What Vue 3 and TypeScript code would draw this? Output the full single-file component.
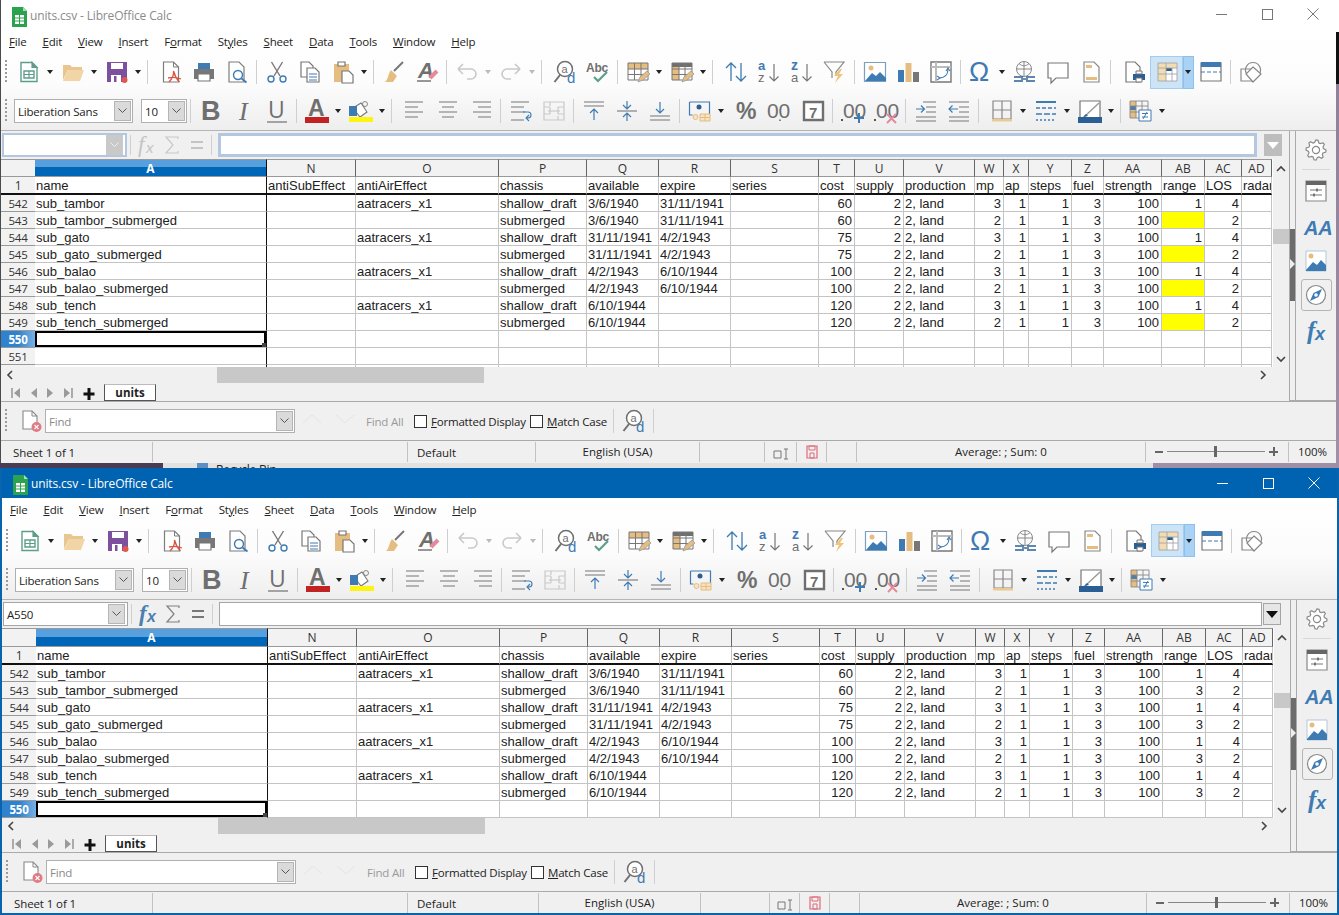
<script setup lang="ts">
import { h } from 'vue'

type Shape =
  | { d: string; f?: string; s?: string; w?: number }
  | { t: string; x: number; y: number; z: number; f: string; b?: boolean; i?: boolean; ff?: string }

const GY = '#6f6f6f'
const LG = '#c9c9c9'
const BL = '#3f7bb3'
const DB = '#2a5f95'
const TN = '#e6bd80'
const GN = '#5d9e8b'
const PU = '#7c4f9f'
const RD = '#e0584a'
const PK = '#e58a9a'

const p = (d: string, f = 'none', s = 'none', w = 1.2): Shape => ({ d, f, s, w })
const t = (txt: string, x: number, y: number, z: number, f: string, o: { b?: boolean; i?: boolean; ff?: string } = {}): Shape => ({ t: txt, x, y, z, f, ...o })
const circle = (cx: number, cy: number, r: number) => `M${cx - r} ${cy}a${r} ${r} 0 1 0 ${2 * r} 0a${r} ${r} 0 1 0 ${-2 * r} 0z`

function gearPath(): string {
  let d = ''
  const n = 8
  for (let k = 0; k < n * 4; k++) {
    const a = (k / (n * 4)) * Math.PI * 2
    const r = k % 4 < 2 ? 10 : 7.6
    d += `${k ? 'L' : 'M'}${(12 + r * Math.cos(a)).toFixed(1)} ${(12 + r * Math.sin(a)).toFixed(1)}`
  }
  return d + 'z'
}

const icons: Record<string, Shape[]> = {
  new: [p('M4 2.5h11l5 5v14H4z', '#fff', GN, 1.4), p('M15 2.5l5 5h-5z', GN, GN), p('M7 11h10v7H7z', '#fff', GN, 1.4), p('M7 14.5h10M12 11v7', 'none', GN, 1.2)],
  open: [p('M2 20V5h7l2 2h10v3H7L2 20z', '#e9c68f'), p('M7 10h16l-4 11H2z', '#f2d5a6')],
  save: [p('M2 2h20v20H2z', PU), p('M6 3h12v6H6z', '#fff'), p('M6 15h10v7H6z', '#fff'), p('M9 16h2.5v6H9z', PU), p(circle(19.5, 20, 3), RD)],
  pdf: [p('M4.5 2h10l5 5v15h-15z', '#fff', '#7d7d7d', 1.2), p('M14.5 2v5h5', 'none', '#7d7d7d', 1), p('M10 22c3-3 5-7 4.5-11c1 4 3 8 6 11M9 18c4-1 8-1 13 1', 'none', '#d9553f', 1.3)],
  print: [p('M6 3h12v6H6z', BL), p('M2 9h20v10H2z', '#777'), p('M6 14h12v7H6z', '#fff', '#777', 1.2)],
  preview: [p('M4 2h10l5 5v15H4z', '#fff', '#7d7d7d', 1.2), p(circle(13, 15, 4.5), '#fff', BL, 1.4), p('M16.5 18.5l5 4', 'none', BL, 1.8)],
  cut: [p('M6.5 2L15 16M17.5 2L9 16', 'none', '#777', 1.4), p(circle(6, 19, 3) + circle(18, 19, 3), 'none', BL, 1.4)],
  copy: [p('M3 2h8l4 4v11H3z', '#fff', '#777', 1.2), p('M9 8h8l4 4v10H9z', '#fff', '#777', 1.2), p('M11 14h8M11 17h8M11 20h8', 'none', BL, 1)],
  paste: [p('M3 4h15v18H3z', TN), p('M7 2h7v4H7z', '#fff', '#777', 1.2), p('M11 11h7l4 4v8H11z', '#fff', '#777', 1.2)],
  clone: [p('M21 2l-9 9', 'none', '#777', 2), p('M9 10l6 6-4 6H3c3-2 3-8 6-12z', TN)],
  clear: [t('A', 3, 18, 22, GY, { b: true, i: true, ff: 'Liberation Sans' }), p('M2 21h14', 'none', '#555', 1.2), p('M15 18l7-7', 'none', PK, 4)],
  undo: [p('M3 9l5-5M3 9l5 5M3 9h13a5 5 0 0 1 0 10h-4', 'none', LG, 1.6)],
  redo: [p('M21 9l-5-5M21 9l-5 5M21 9H8a5 5 0 0 0 0 10h4', 'none', LG, 1.6)],
  find: [p(circle(12, 9, 7.5), '#fff', GY, 1.5), p('M7 15L1.5 22', 'none', GY, 2), t('a', 8.5, 12.5, 11, GY, { ff: 'Liberation Sans' }), t('d', 14, 22.5, 15, BL, { ff: 'Liberation Sans' })],
  spell: [t('Abc', 0, 12, 12, GY, { b: true, ff: 'Liberation Sans' }), p('M8 17l4 4 9-9', 'none', GN, 2.2)],
  table: [p('M2 3h20v6H2z', TN), p('M2 3h20v17H2zM2 9h20M2 14.5h20M8.5 3v17M15 3v17', 'none', '#777', 1), p('M12 22l2-5 7-6 3 3-7 6z', TN, '#999', .8)],
  col: [p('M2 3h7v17H2z', TN), p('M2 3h20v4H2z', GY), p('M2 3h20v17H2zM2 9h20M2 14.5h20M9 3v17M15 3v17', 'none', '#777', 1), p('M12 22l2-5 7-6 3 3-7 6z', TN, '#999', .8)],
  sort: [p('M7 21V3M2 8l5-5 5 5M17 3v18M12 16l5 5 5-5', 'none', BL, 1.3)],
  az: [t('a', 1, 10, 13, BL, { b: true, ff: 'Liberation Sans' }), t('z', 1, 22, 13, GY, { ff: 'Liberation Sans' }), p('M17 4v17M12.5 16.5l4.5 4.5 4.5-4.5', 'none', '#777', 1.2)],
  za: [t('z', 1, 10, 14, BL, { b: true, ff: 'Liberation Sans' }), t('a', 1, 22, 13, GY, { ff: 'Liberation Sans' }), p('M17 4v17M12.5 16.5l4.5 4.5 4.5-4.5', 'none', '#777', 1.2)],
  filter: [p('M1 2h20l-8 10v4', 'none', '#888', 1.2), p('M1 2l8 10v6', 'none', '#888', 1.2), p('M17 9l-6 7h4l-3 7 8-9h-4l3-5z', '#efc478')],
  image: [p('M1.5 2.5h21v19h-21z', '#fff', '#7a9fc0', 1.2), p(circle(8, 8, 2.5), TN), p('M2 21l7-8 4 3 4-4 6 6v3z', BL)],
  chart: [p('M2 10h6v12H2z', BL), p('M9.5 3h6v19h-6z', TN), p('M17 12h6v10h-6z', '#777')],
  pivot: [p('M2 2h20v20H2z', '#fff', '#777', 1.4), p('M2 7h20M7 2v20', 'none', '#bbb', 2), p('M10 18c5 0 9-3 9-9', 'none', BL, 1.1), p('M17 11l2-3 2 3M8 16l3 2-3 2', 'none', BL, 1.1)],
  omega: [t('Ω', 0, 21, 27, BL, { ff: 'Liberation Sans' })],
  link: [p(circle(11, 9, 7.5) + 'M3.5 9h15M11 1.5v15M6 3.5c3 3 7 3 10 0', 'none', '#888', 1), p('M1 17h9M1 21h9M13 17h9M13 21h9', 'none', DB, 1.6), p('M8 19h7', 'none', DB, 1.4)],
  comment: [p('M2 3h20v15H10l-5 5v-5H2z', '#fff', '#777', 1.2)],
  header: [p('M5 2h10l5 5v15H5z', '#fff', '#888', 1.2), p('M7 5h6v3H7zM7 17h11v3H7z', TN)],
  printarea: [p('M4 2h9l5 5v15H4z', '#fff', '#777', 1.2), p('M11 14h12v6H11z', DB), p('M14 11h6v3h-6z', '#fff', '#777', 1), p('M14 18h6v4h-6z', '#fff', '#777', 1)],
  freeze: [p('M3 3h19v18H3z', '#fff'), p('M3 3h8v18H3zM11 3h11v5H11z', '#f1dcb3'), p('M11 8h6v3h-6z', DB), p('M3 3h19v18H3zM3 8h19M3 14h19M11 3v18M17 8v13', 'none', '#a5a5a5', .9)],
  split: [p('M2 3h20v18H2z', '#fff', '#777', 1.2), p('M2 2h20v5H2z', BL), p('M2 12h4M8 12h4M14 12h4M20 12h2', 'none', BL, 1.2)],
  shapes: [p('M2 9h12v12H2z', '#fff', '#888', 1.2), p('M14 2.5a7.5 7.5 0 1 1-.01 0z', 'none', '#888', 1.2), p('M14 7l8 7-8 8-7-8z', '#fff', '#888', 1.2)],
  bold: [t('B', 2, 21, 27, GY, { b: true, ff: 'Liberation Sans' })],
  ital: [t('I', 7, 21, 26, GY, { i: true, ff: 'Liberation Serif' })],
  under: [t('U', 3, 19, 23, GY, { ff: 'Open Sans' }), p('M2 23h20', 'none', GY, 1.2)],
  color: [t('A', 3, 17, 23, GY, { b: true, ff: 'Liberation Sans' }), p('M0 18h24v6H0z', '#c32222')],
  bg: [p('M4 9l8-5 6 9-7 5z', '#fff', '#777', 1.1), p('M0 7h8v10H0z', BL), p(circle(16, 5, 2.5), 'none', '#888', 1), p('M0 18h24v5H0z', '#fdf511')],
  left: [p('M2 3h18M2 8h13M2 13h18M2 18h13', 'none', '#777', 1.1)],
  center: [p('M3 3h18M6 8h12M3 13h18M6 18h12', 'none', '#777', 1.1)],
  right: [p('M4 3h18M9 8h13M4 13h18M9 18h13', 'none', '#777', 1.1)],
  wrap: [p('M2 3h18M2 8h13M2 13h14M2 21h13', 'none', '#777', 1.1), p('M14 13h5a2.5 2.5 0 0 1 0 6h-1M20 16l-3 3 3 3', 'none', BL, 1.1)],
  merge: [p('M2 3h20v18H2zM2 8h6M16 8h6M2 15h6M16 15h6M8 8v7M16 8v7M8 3v4M16 17v4', 'none', LG, 1.2), p('M6 12h12', 'none', LG, 1.2)],
  top: [p('M2 3h20M2 7h20M2 21', 'none', '#777', 1.1), p('M12 21v-10M8 14l4-4 4 4', 'none', BL, 1.2)],
  mid: [p('M2 12h20', 'none', '#777', 1.1), p('M12 2v7M8 6l4 4 4-4M12 22v-8M8 18l4-4 4 4', 'none', BL, 1.2)],
  bot: [p('M2 17h20M2 21h20', 'none', '#777', 1.1), p('M12 3v11M8 10l4 4 4-4', 'none', BL, 1.2)],
  currency: [p('M1.5 3h20v13h-9', 'none', BL, 1.2), p('M1.5 3v13h3', 'none', BL, 1.2), p(circle(11, 8, 2.5), DB), p(circle(7.5, 18, 2.5) + 'M12 15h10v7H12zM12 18.5h10M17 15v7', '#f4e3c4', TN, 1)],
  pct: [t('%', 1, 20, 23, GY, { b: true, ff: 'Liberation Sans' })],
  num: [t('00', -1, 19, 21, GY, { ff: 'Liberation Sans' }), p('M11.2 20.5h1.6v1.6h-1.6z', GY)],
  date: [p('M3 3h19v18H3z', '#fff', GY, 2.4), t('7', 8, 18.5, 15, GY, { b: true, ff: 'Liberation Sans' })],
  adddec: [p('M0 20h2v2H0z', '#555'), t('00', 2, 19, 21, GY, { ff: 'Liberation Sans' }), p('M18 14v10M13 19h10', 'none', BL, 2)],
  deldec: [p('M0 20h2v2H0z', '#555'), t('00', 2, 19, 21, GY, { ff: 'Liberation Sans' }), p('M13 15l9 9M22 15l-9 9', 'none', PK, 2)],
  indent: [p('M9 3h13M12 8h10M12 13h10M2 18h20M2 22h20', 'none', '#777', 1.1), p('M2 10h8M7 6.5l3.5 3.5-3.5 3.5', 'none', BL, 1.2)],
  outdent: [p('M2 3h20M12 8h10M12 13h10M2 18h20M2 22h20', 'none', '#777', 1.1), p('M11 10H2M5.5 6.5L2 10l3.5 3.5', 'none', BL, 1.2)],
  borders: [p('M3 2h18v18H3zM3 11h18M12 2v18', 'none', '#888', 1.2), p('M2 20h20v2.5H2z', '#ecc98f')],
  bstyle: [p('M2 3h20', 'none', BL, 2), p('M2 9h4M8 9h4M14 9h4M20 9h2M2 15h6M10 15h6M18 15h4', 'none', BL, 1.6), p('M2 21h2M6 21h2M10 21h2M14 21h2M18 21h2', 'none', BL, 1.6)],
  bcolor: [p('M2 2h20v18H2z', '#fff', '#777', 1.2), p('M6 18L21 4', 'none', '#999', 1.4), p('M5 18l3-3 2 2z', DB), p('M0 18h24v6H0z', DB)],
  cond: [p('M1 2h6v17H1z', TN), p('M1 7h6v4H1z', '#4f7ea9'), p('M1 2h18v17H1zM1 7h18M1 13h18M7 2v17M13 2v11', 'none', '#888', .9), p('M10 11h12v11H10z', '#fff', BL, 1), p('M13 14.5h6M13 18h6M18 13l-4 7', 'none', BL, 1)],
  gear: [p(gearPath(), '#fff', '#8a8a8a', 1.2), p(circle(12, 12, 3.6), '#fff', '#8a8a8a', 1.2)],
  props: [p('M2 2h20v20H2z', '#fff', '#888', 1.2), p('M2 2h20v4H2z', '#666'), p('M6 11h12M6 16h12', 'none', '#777', 1), p('M13 9.5v3M10 14.5v3', 'none', '#555', 1.4)],
  styles: [t('AA', 0, 21, 20, BL, { i: true, b: true, ff: 'Liberation Sans' })],
  gallery: [p('M2 2h20v20H2z', '#fff', '#b5c6d6', 1), p(circle(7, 7, 2.5), TN), p('M2 21l7-8 4 3 4-5 5 5v6H2z', BL)],
  nav: [p(circle(12, 12, 9.5), '#fff', '#8a8a8a', 1.2), p('M18 6l-3.5 8L6 18l3.5-8z', BL), p(circle(12, 12, 1.8), '#fff')],
  fx: [t('f', 3, 20, 25, BL, { b: true, i: true, ff: 'Liberation Serif' }), t('x', 11, 21, 18, BL, { b: true, i: true, ff: 'Liberation Sans' })],
  fxg: [t('f', 3, 19, 23, '#c4c4c4', { i: true, ff: 'Liberation Serif' }), t('x', 11, 20, 15, '#c4c4c4', { i: true, ff: 'Liberation Sans' })],
  fxb: [t('f', 3, 19, 23, '#4a7fb0', { b: true, i: true, ff: 'Liberation Serif' }), t('x', 11, 20, 16, '#4a7fb0', { b: true, i: true, ff: 'Liberation Sans' })],
  sumg: [p('M18 6V4H6l7 8-7 8h12v-2', 'none', '#c8c8c8', 1.2)],
  sumb: [p('M18 6V4H6l7 8-7 8h12v-2', 'none', '#808080', 1.2)],
  eqg: [p('M6 9h12M6 15h12', 'none', '#c4c4c4', 2)],
  eqb: [p('M6 9h12M6 15h12', 'none', '#777', 2)],
  close: [p('M4 2h9l5 5v13H4z', '#fff', '#888', 1.1), p('M13 2v5h5', 'none', '#888', 1), p(circle(17.5, 18, 5), '#e07b85'), p('M15.5 16l4 4M19.5 16l-4 4', 'none', '#fff', 1.1)],
  calc: [p('M1 0h11l4 4v16H1z', '#2aa24e'), p('M12 0l4 4h-4z', '#a6dcb6'), p('M4 8h9v9H4z', '#fff'), p('M4 11h9M4 14h9M8.5 8v9', 'none', '#2aa24e', 1)],
  first: [p('M2 2v10', 'none', '#9a9a9a', 1.6), p('M10 2v10L4 7z', '#9a9a9a')],
  prev: [p('M10 2v10L4 7z', '#9a9a9a')],
  next: [p('M3 2v10l6-5z', '#9a9a9a')],
  last: [p('M11 2v10', 'none', '#9a9a9a', 1.6), p('M3 2v10l6-5z', '#9a9a9a')],
  plus: [p('M6 1v12M0.5 7h11', 'none', '#111', 3)],
  sel: [p('M1 7h7v7H1z', 'none', '#777', 1), p('M11 5h4M13 5v10M11 15h4', 'none', '#777', 1)],
  docmod: [p('M3 2h10v12H3z', 'none', '#dd6a7a', 1.2), p('M5 2h6v4H5zM6 9h4v5H6z', 'none', '#dd6a7a', 1)],
  ghostup: [p('M1 12l9-8 9 8', 'none', '#e4e4e4', 1)],
  ghostdn: [p('M1 4l9 8 9-8', 'none', '#e4e4e4', 1)],
}

const Ico = (props: { n: string; s?: number; v?: number }) => {
  const size = props.s ?? 24
  const vb = props.v ?? 24
  return h(
    'svg',
    { width: size, height: size, viewBox: `0 0 ${vb} ${vb}`, style: 'display:block;overflow:visible' },
    (icons[props.n] || []).map((q) =>
      'd' in q
        ? h('path', { d: q.d, fill: q.f, stroke: q.s, 'stroke-width': q.w })
        : h('text', {
            x: q.x,
            y: q.y,
            fill: q.f,
            'font-size': q.z,
            'font-family': q.ff,
            'font-weight': q.b ? 700 : 400,
            'font-style': q.i ? 'italic' : 'normal',
          }, q.t),
    ),
  )
}

const menus = [
  ['', 'F', 'ile'], ['', 'E', 'dit'], ['', 'V', 'iew'], ['', 'I', 'nsert'], ['F', 'o', 'rmat'], ['St', 'y', 'les'],
  ['', 'S', 'heet'], ['', 'D', 'ata'], ['', 'T', 'ools'], ['', 'W', 'indow'], ['', 'H', 'elp'],
]

const tb1 = 'new ar open ar save ar sepw pdf print preview sep cut copy paste ar sep clone clear sep undo arg redo arg sepw find spell sep table ar col ar sepw sort az za filter sep image chart pivot sep omega ar link comment header sepw printarea freeze arh split sep shapes'.split(' ')
const tb2 = 'sep bold ital under sep color ar bg ar sepw left center right sep wrap merge sep top mid bot sep currency ar gap pct num date sep adddec deldec sep indent outdent sepw borders ar bstyle ar bcolor ar sep cond ar'.split(' ')

const cols = [
  { h: 'A', w: 232 }, { h: 'N', w: 89 }, { h: 'O', w: 143 }, { h: 'P', w: 88 }, { h: 'Q', w: 72 }, { h: 'R', w: 72 },
  { h: 'S', w: 88 }, { h: 'T', w: 36 }, { h: 'U', w: 49 }, { h: 'V', w: 71 }, { h: 'W', w: 29 }, { h: 'X', w: 25 },
  { h: 'Y', w: 43 }, { h: 'Z', w: 32 }, { h: 'AA', w: 58 }, { h: 'AB', w: 43 }, { h: 'AC', w: 37 }, { h: 'AD', w: 30 },
]
const gridCols = '34px ' + cols.map((c) => c.w + 'px').join(' ')

const head = ['name', 'antiSubEffect', 'antiAirEffect', 'chassis', 'available', 'expire', 'series', 'cost', 'supply', 'production', 'mp', 'ap', 'steps', 'fuel', 'strength', 'range', 'LOS', 'radar']
const numeric = new Set([7, 8, 10, 11, 12, 13, 14, 15, 16])

const base: [number, string, string, string, string, string, string, string][] = [
  [542, 'sub_tambor', 'aatracers_x1', 'shallow_draft', '3/6/1940', '31/11/1941', '60', '3'],
  [543, 'sub_tambor_submerged', '', 'submerged', '3/6/1940', '31/11/1941', '60', '2'],
  [544, 'sub_gato', 'aatracers_x1', 'shallow_draft', '31/11/1941', '4/2/1943', '75', '3'],
  [545, 'sub_gato_submerged', '', 'submerged', '31/11/1941', '4/2/1943', '75', '2'],
  [546, 'sub_balao', 'aatracers_x1', 'shallow_draft', '4/2/1943', '6/10/1944', '100', '3'],
  [547, 'sub_balao_submerged', '', 'submerged', '4/2/1943', '6/10/1944', '100', '2'],
  [548, 'sub_tench', 'aatracers_x1', 'shallow_draft', '6/10/1944', '', '120', '3'],
  [549, 'sub_tench_submerged', '', 'submerged', '6/10/1944', '', '120', '2'],
]

function rowsFor(yellow: boolean) {
  const out = base.map((r) => {
    const sub = r[7] === '2'
    const range = sub ? (yellow ? '' : '3') : '1'
    return {
      n: String(r[0]),
      cells: [r[1], '', r[2], r[3], r[4], r[5], '', r[6], '2', '2, land', r[7], '1', '1', '3', '100', range, sub ? '2' : '4', ''],
      mark: sub && yellow,
    }
  })
  const blank = (n: string) => ({ n, cells: Array(18).fill('') as string[], mark: false })
  out.push(blank('550'))
  if (yellow) {
    out.push(blank('551'))
    out.push(blank(''))
  }
  return out
}

const windows = [
  { id: 'a', active: false, rows: rowsFor(true), name: '' },
  { id: 'b', active: true, rows: rowsFor(false), name: 'A550' },
]
const statusTexts = { sheet: 'Sheet 1 of 1', style: 'Default', lang: 'English (USA)', sum: 'Average: ; Sum: 0', zoom: '100%' }
</script>

<template>
  <div class="desk">
    <div class="edge-black"></div>
    <div class="strip">
      <div class="strip-dark"></div>
      <div class="strip-light"><span class="rb-icon"></span><span class="rb">Recycle Bin</span></div>
    </div>

    <section v-for="win in windows" :key="win.id" class="win" :class="'win-' + win.id">
      <header class="title">
        <Ico n="calc" :s="17" :v="17" class="title-ico" />
        <span class="title-text">units.csv - LibreOffice Calc</span>
        <div class="caption">
          <span class="cap"><i class="c-min"></i></span>
          <span class="cap"><i class="c-max"></i></span>
          <span class="cap"><svg width="12" height="12" viewBox="0 0 12 12"><path d="M.5.5l11 11M11.5.5l-11 11" fill="none" stroke="currentColor" /></svg></span>
        </div>
      </header>

      <div class="chrome">
        <nav class="menu">
          <span v-for="m in menus" :key="m[1] + m[2]" class="mi">{{ m[0] }}<u>{{ m[1] }}</u>{{ m[2] }}</span>
        </nav>

        <div class="bar bar1">
          <i class="grip"></i>
          <template v-for="(it, k) in tb1" :key="k">
            <i v-if="it === 'sep'" class="sep"></i>
            <i v-else-if="it === 'sepw'" class="sep wide"></i>
            <i v-else-if="it === 'ar'" class="ar"></i>
            <i v-else-if="it === 'arg'" class="ar grey"></i>
            <span v-else-if="it === 'arh'" class="ar-h"><i class="ar"></i></span>
            <span v-else class="tool" :class="{ hl: it === 'freeze' }"><Ico :n="it" /></span>
          </template>
        </div>

        <div class="bar bar2">
          <i class="grip"></i>
          <div class="combo font"><span>Liberation Sans</span><b class="dd"><svg width="9" height="6" viewBox="0 0 9 6"><path d="M.5.5l4 4 4-4" fill="none" stroke="#555" /></svg></b></div>
          <div class="combo size"><span>10</span><b class="dd"><svg width="9" height="6" viewBox="0 0 9 6"><path d="M.5.5l4 4 4-4" fill="none" stroke="#555" /></svg></b></div>
          <template v-for="(it, k) in tb2" :key="k">
            <i v-if="it === 'sep'" class="sep"></i>
            <i v-else-if="it === 'sepw'" class="sep wide"></i>
            <i v-else-if="it === 'gap'" class="gap"></i>
            <i v-else-if="it === 'ar'" class="ar"></i>
            <span v-else class="tool"><Ico :n="it" /></span>
          </template>
        </div>
      </div>

      <div class="work">
        <div class="main">
          <div class="fbar">
            <div class="namebox"><span>{{ win.name }}</span><b class="dd"><svg width="9" height="6" viewBox="0 0 9 6"><path d="M.5.5l4 4 4-4" fill="none" :stroke="win.active ? '#555' : '#eee'" /></svg></b></div>
            <i class="fsep"></i>
            <span class="fb-ico"><Ico :n="win.active ? 'fxb' : 'fxg'" /></span>
            <span class="fb-ico"><Ico :n="win.active ? 'sumb' : 'sumg'" /></span>
            <span class="fb-ico"><Ico :n="win.active ? 'eqb' : 'eqg'" /></span>
            <i class="fsep f2"></i>
            <div class="finput"></div>
            <div class="fdrop"><i></i></div>
          </div>

          <div class="sheet">
            <div class="grid" :style="{ gridTemplateColumns: gridCols }">
              <div class="corner"></div>
              <div v-for="c in cols" :key="c.h" class="ch" :class="{ sel: c.h === 'A' }">{{ c.h }}</div>

              <div class="rh name-row">1</div>
              <div v-for="(c, k) in head" :key="c" class="cell name-row" :class="{ froz: k === 0 }">{{ c }}</div>

              <template v-for="(r, ri) in win.rows" :key="ri">
                <div class="rh" :class="{ sel: r.n === '550' }">{{ r.n }}</div>
                <div
                  v-for="(c, k) in r.cells"
                  :key="k"
                  class="cell"
                  :class="{ num: numeric.has(k), froz: k === 0, mark: r.mark && k === 15, cursor: r.n === '550' && k === 0 }"
                >{{ c }}</div>
              </template>
            </div>
            <div class="vscroll">
              <svg class="chev" width="10" height="7" viewBox="0 0 10 7"><path d="M1 6l4-4 4 4" fill="none" stroke="#444" stroke-width="1.6" /></svg>
              <div class="vthumb"></div>
              <svg class="chev down" width="10" height="7" viewBox="0 0 10 7"><path d="M1 1l4 4 4-4" fill="none" stroke="#444" stroke-width="1.6" /></svg>
            </div>
          </div>

          <div class="hscroll">
            <svg width="7" height="10" viewBox="0 0 7 10" class="hl-ch"><path d="M6 1L2 5l4 4" fill="none" stroke="#444" stroke-width="1.6" /></svg>
            <div class="hthumb"></div>
            <svg width="7" height="10" viewBox="0 0 7 10" class="hr-ch"><path d="M1 1l4 4-4 4" fill="none" stroke="#444" stroke-width="1.6" /></svg>
          </div>

          <div class="tabs">
            <span class="nav"><Ico n="first" :s="14" :v="14" /></span>
            <span class="nav"><Ico n="prev" :s="14" :v="14" /></span>
            <span class="nav"><Ico n="next" :s="14" :v="14" /></span>
            <span class="nav"><Ico n="last" :s="14" :v="14" /></span>
            <span class="add"><Ico n="plus" :s="12" :v="12" /></span>
            <span class="tab">units</span>
          </div>
        </div>

        <aside class="deck">
          <div class="divider"><span class="dthumb"><i></i></span></div>
          <div class="side">
            <span class="si gear"><Ico n="gear" /></span>
            <i class="side-sep"></i>
            <span class="si"><Ico n="props" /></span>
            <span class="si"><Ico n="styles" /></span>
            <span class="si"><Ico n="gallery" /></span>
            <span class="si boxed"><Ico n="nav" /></span>
            <span class="si"><Ico n="fx" /></span>
          </div>
        </aside>
      </div>

      <div class="findbar">
        <i class="grip"></i>
        <span class="f-close"><Ico n="close" /></span>
        <div class="combo findbox"><span>Find</span><b class="dd"><svg width="9" height="6" viewBox="0 0 9 6"><path d="M.5.5l4 4 4-4" fill="none" stroke="#555" /></svg></b></div>
        <span class="ghost first-g"><Ico n="ghostup" :s="20" :v="20" /></span>
        <span class="ghost"><Ico n="ghostdn" :s="20" :v="20" /></span>
        <span class="findall">Find All</span>
        <label class="chk c1"><i></i><span><u>F</u>ormatted Display</span></label>
        <label class="chk c2"><i></i><span><u>M</u>atch Case</span></label>
        <i class="sep fs1"></i>
        <span class="f-find"><Ico n="find" /></span>
        <i class="sep fs2"></i>
      </div>

      <footer class="status">
        <span class="st">{{ statusTexts.sheet }}</span>
        <span class="st"></span>
        <span class="st">{{ statusTexts.style }}</span>
        <span class="st ctr">{{ statusTexts.lang }}</span>
        <span class="st"></span>
        <span class="st ctr"><Ico n="sel" :s="16" :v="16" /></span>
        <span class="st ctr"><Ico n="docmod" :s="16" :v="16" /></span>
        <span class="st"></span>
        <span class="st ctr">{{ statusTexts.sum }}</span>
        <span class="st zoomer"><b class="zm"></b><i class="zline"><i class="zthumb"></i></i><b class="zp"></b></span>
        <span class="st ctr last">{{ statusTexts.zoom }}</span>
      </footer>
    </section>
  </div>
</template>

<style>
html, body { margin: 0; background: #2e2632; }
</style>

<style scoped>
.desk {
  position: relative;
  width: 1339px;
  height: 915px;
  overflow: hidden;
  background: linear-gradient(180deg, #8d7c96, #a08fa6 50%, #3f63a0 100%);
  font-family: "Open Sans", "Noto Sans", sans-serif;
  font-size: 11.5px;
  letter-spacing: -0.2px;
  color: #222;
}
.edge-black { position: absolute; left: 1336px; top: 0; width: 3px; height: 84px; background: linear-gradient(180deg, #fff 0 32px, #111 32px 100%); }
.strip { position: absolute; left: 0; top: 463px; width: 1153px; height: 5px; display: flex; overflow: hidden; }
.strip-dark { width: 163px; background: #4a3c55; }
.strip-light { flex: 1; background: #e2e2e2; padding-left: 34px; display: flex; gap: 8px; }
.rb-icon { width: 11px; height: 8px; background: #5f8fc0; }
.rb { line-height: 12px; font-size: 12px; color: #222; margin-top: 1px; }

.win { position: absolute; left: 0; display: flex; flex-direction: column; box-sizing: border-box; background: #f0f0f0; }
.win-a { top: 0; width: 1336px; height: 463px; border-left: 1px solid #4b4b4b; }
.win-b { top: 468px; width: 1339px; height: 447px; border: 2px solid #0a63ad; border-top: 0; }

.title { height: 30px; flex: none; display: flex; align-items: center; position: relative; }
.win-a .title { background: #fff; color: #8b8b8b; }
.win-b .title { background: #0063b1; color: #fff; }
.title-ico { margin-left: 10px; margin-right: 2px; }
.title-text { font-size: 12px; letter-spacing: -0.15px; }
.caption { position: absolute; top: 0; height: 30px; display: flex; }
.win-a .caption { color: #777; right: 0; top: -1px; }
.win-b .caption { color: #fff; right: 0; }
.cap { width: 46px; height: 30px; display: flex; align-items: center; justify-content: center; }
.c-min { width: 11px; border-top: 1px solid currentColor; }
.c-max { width: 9px; height: 9px; border: 1px solid currentColor; }

.chrome { flex: none; background: linear-gradient(180deg, #fff 0%, #fcfcfc 55%, #eeeeee 100%); border-bottom: 1px solid #b5b5b5; }
.menu { height: 24px; display: flex; align-items: center; padding-bottom: 2px; box-sizing: border-box; }
.mi { padding: 0 8px; color: #222; }
.bar { display: flex; align-items: center; padding-left: 4px; box-sizing: border-box; }
.bar1 { height: 36px; }
.win-b .bar1 { height: 37px; }
.bar2 { height: 40px; padding-top: 2px; }
.grip { width: 2px; height: 24px; margin-right: 5px; flex: none; background: repeating-linear-gradient(180deg, #9a9a9a 0 2px, transparent 2px 4px); }
.bar2 .grip { margin-right: 7px; }
.tool { width: 33px; height: 24px; flex: none; display: flex; justify-content: center; align-items: center; }
.tool.hl { height: 33px; background: #cde4f7; box-shadow: inset 0 0 0 1px #a2cdf0; }
.ar { width: 11px; height: 24px; flex: none; position: relative; display: block; }
.ar::after { content: ""; position: absolute; left: 2px; top: 10px; border: 3.5px solid transparent; border-top: 4px solid #222; border-bottom: 0; }
.ar.grey::after { border-top-color: #bbb; }
.ar-h { width: 11px; height: 33px; flex: none; background: #a9d2f5; box-shadow: inset 0 0 0 1px #8fc0ea; display: flex; align-items: center; }
.sep { width: 7px; height: 24px; flex: none; position: relative; display: block; }
.sep.wide { width: 10px; }
.sep::after { content: ""; position: absolute; left: 3px; top: 0; bottom: 0; width: 1px; background: #cfcfcf; }
.gap { width: 3px; flex: none; }

.combo { box-sizing: border-box; height: 24px; flex: none; background: #fff; border: 1px solid #b0b0b0; display: flex; align-items: center; justify-content: space-between; padding: 0 1px 0 3px; }
.combo.font { width: 119px; margin-right: 8px; }
.combo.size { width: 46px; }
.dd { width: 17px; height: 20px; background: #dadada; border: 1px solid #b5b5b5; box-sizing: border-box; display: flex; align-items: center; justify-content: center; }

.work { display: flex; flex: none; }
.main { width: 1288px; flex: none; display: flex; flex-direction: column; }
.fbar { height: 28px; display: flex; align-items: center; padding-left: 1px; }
.namebox { box-sizing: border-box; width: 125px; height: 24px; flex: none; background: #fff; display: flex; align-items: center; justify-content: space-between; padding: 0 2px 0 3px; }
.win-a .namebox { border: 2px solid #b3c8e0; }
.win-a .namebox .dd { background: #c9c9c9; border: 0; height: 20px; }
.win-b .namebox { border: 1px solid #a5a5a5; }
.fsep { width: 1px; height: 20px; background: #cfcfcf; margin: 0 3px 0 3px; flex: none; }
.fsep.f2 { margin: 0 6px 0 2px; }
.fb-ico { width: 25px; height: 24px; flex: none; display: flex; justify-content: center; }
.finput { box-sizing: border-box; height: 24px; flex: none; background: #fff; }
.win-a .finput { width: 1039px; border: 3px solid #b3c8e0; margin-right: 7px; }
.win-b .finput { width: 1043px; border: 1px solid #a5a5a5; margin-right: 1px; }
.fdrop { box-sizing: border-box; width: 18px; height: 22px; display: flex; align-items: center; justify-content: center; flex: none; }
.win-a .fdrop { background: #bdbdbd; }
.win-b .fdrop { background: #e6e6e6; border: 1px solid #a5a5a5; }
.fdrop i { border: 6px solid transparent; border-top: 7px solid #fff; border-bottom: 0; }
.win-b .fdrop i { border-top-color: #111; }

.sheet { display: flex; overflow: hidden; background: #fff; }
.win-a .sheet { height: 208px; }
.win-b .sheet { height: 190px; }
.grid { width: 1272px; flex: none; display: grid; grid-template-rows: 18px 18px; grid-auto-rows: 17px; overflow: hidden; align-content: start; letter-spacing: 0; }
.win-b .grid { grid-template-rows: 19px 18px; }
.corner, .ch, .rh { box-sizing: border-box; background: #f2f2f2; color: #333; display: flex; align-items: center; justify-content: center; font-size: 12px; border-right: 1px solid #666; border-bottom: 1px solid #999; overflow: hidden; }
.corner { border-top: 1px solid #999; border-right: 0; }
.ch { border-top: 1px solid #999; }
.ch.sel { background: linear-gradient(180deg, #58a0dd 0 45%, #0066b8 45% 100%); color: #fff; font-weight: 700; border-right-color: #111; }
.rh { border-right: 0; font-size: 11.5px; letter-spacing: -0.3px; }
.rh.sel { background: linear-gradient(90deg, #2f82cd 0 50%, #76b1e6 100%); color: #fff; font-weight: 700; }
.rh.name-row { font-size: 12px; }
.name-row { border-bottom: 2px solid #111 !important; }
.cell { box-sizing: border-box; position: relative; font-family: "Liberation Sans", Arial, sans-serif; font-size: 13px; line-height: 17px; padding: 0 1px; white-space: nowrap; overflow: hidden; background: #fff; color: #222; border-right: 1px solid #c4c4c4; border-bottom: 1px solid #c4c4c4; }
.cell.num { text-align: right; padding-right: 2px; }
.cell.froz { border-right: 1px solid #111; }
.cell.mark { background: #ffff00; }
.cell.cursor { box-shadow: inset 0 0 0 2px #000; }
.cell.cursor::after { content: ""; position: absolute; right: 0; bottom: 0; width: 4px; height: 4px; background: #444; }

.vscroll { width: 16px; flex: none; background: #f0f0f0; position: relative; }
.chev { position: absolute; left: 3px; top: 6px; }
.chev.down { top: auto; bottom: 4px; }
.vthumb { position: absolute; left: 0; width: 16px; top: 70px; height: 15px; background: #c8c8c8; }
.win-b .vthumb { top: 65px; }

.hscroll { height: 17px; position: relative; background: #f0f0f0; flex: none; }
.hthumb { position: absolute; left: 216px; width: 267px; top: 0; bottom: 1px; background: #c8c8c8; }
.hl-ch { position: absolute; left: 5px; top: 3px; }
.hr-ch { position: absolute; left: 1259px; top: 3px; }

.tabs { height: 17px; flex: none; display: flex; align-items: center; padding-left: 7px; background: #f0f0f0; }
.nav { width: 17px; display: flex; justify-content: center; }
.add { width: 12px; display: flex; justify-content: center; margin: 0 9px 0 7px; }
.tab { box-sizing: border-box; width: 52px; height: 17px; background: #fff; border: 1px solid #555; border-top-color: #bbb; text-align: center; font-weight: 700; line-height: 15px; color: #222; letter-spacing: 0; }

.deck { width: 47px; flex: none; display: flex; position: relative; }
.divider { box-sizing: border-box; width: 7px; border-left: 1px solid #aaa; border-right: 1px solid #aaa; border-bottom: 1px solid #aaa; position: relative; flex: none; }
.dthumb { position: absolute; left: 0; top: 98px; width: 5px; height: 72px; background: #6c6c6c; }
.dthumb i { position: absolute; left: 0; top: 30px; border: 5px solid transparent; border-left: 5px solid #eee; border-right: 0; }
.side { flex: 1; display: flex; flex-direction: column; align-items: center; border-bottom: 1px solid #aaa; background: #f0f0f0; }
.si { width: 31px; height: 35px; display: flex; align-items: center; justify-content: center; box-sizing: border-box; flex: none; }
.si.gear { height: 38px; }
.side-sep { width: 28px; height: 1px; background: #d8d8d8; margin-bottom: 3px; }
.si.boxed { border: 1px solid #b5b5b5; border-radius: 3px; height: 32px; margin: 1px 0 2px; }

.findbar { box-sizing: border-box; height: 39px; flex: none; display: flex; align-items: center; padding-left: 4px; border-top: 1px solid #aaa; background: #f0f0f0; }
.findbar .grip { margin-right: 12px; }
.f-close { width: 24px; margin-right: 2px; }
.combo.findbox { width: 250px; height: 24px; color: #8a8a8a; }
.ghost { width: 20px; margin-left: 13px; }
.first-g { margin-left: 7px; }
.findall { margin-left: 11px; color: #9a9a9a; width: 44px; white-space: nowrap; }
.chk { display: flex; align-items: center; white-space: nowrap; color: #222; }
.chk i { box-sizing: border-box; width: 13px; height: 13px; background: #fff; border: 1px solid #333; margin-right: 4px; }
.c1 { margin-left: 4px; width: 116px; }
.c2 { width: 80px; }
.f-find { width: 24px; margin: 0 4px 0 5px; }

.status { box-sizing: border-box; height: 22px; flex: none; display: grid; border-top: 1px solid #aaa; background: #f0f0f0; align-items: center; letter-spacing: 0; }
.win-a .status { grid-template-columns: 152px 255px 128px 164px 65px 32px 30px 30px 289px 143px 1fr; }
.win-b .status { grid-template-columns: 151px 255px 131px 162px 69px 30px 30px 30px 287px 143px 1fr; }
.st { box-sizing: border-box; height: 20px; line-height: 22px; border-right: 1px solid #c2c2c2; padding-left: 9px; white-space: nowrap; }
.st:first-child { padding-left: 12px; letter-spacing: -0.1px; }
.st.ctr { padding-left: 0; display: flex; justify-content: center; align-items: center; }
.st.last { border-right: 0; }
.zoomer { display: flex; align-items: center; padding-left: 9px; }
.zm { width: 8px; height: 2px; background: #666; }
.zp { width: 9px; height: 9px; background: linear-gradient(#666, #666) center / 100% 2px no-repeat, linear-gradient(#666, #666) center / 2px 100% no-repeat; margin-left: 4px; }
.zline { position: relative; width: 98px; height: 1px; background: #888; margin-left: 4px; }
.zthumb { position: absolute; left: 47px; top: -5px; width: 3px; height: 11px; background: #666; }
</style>
